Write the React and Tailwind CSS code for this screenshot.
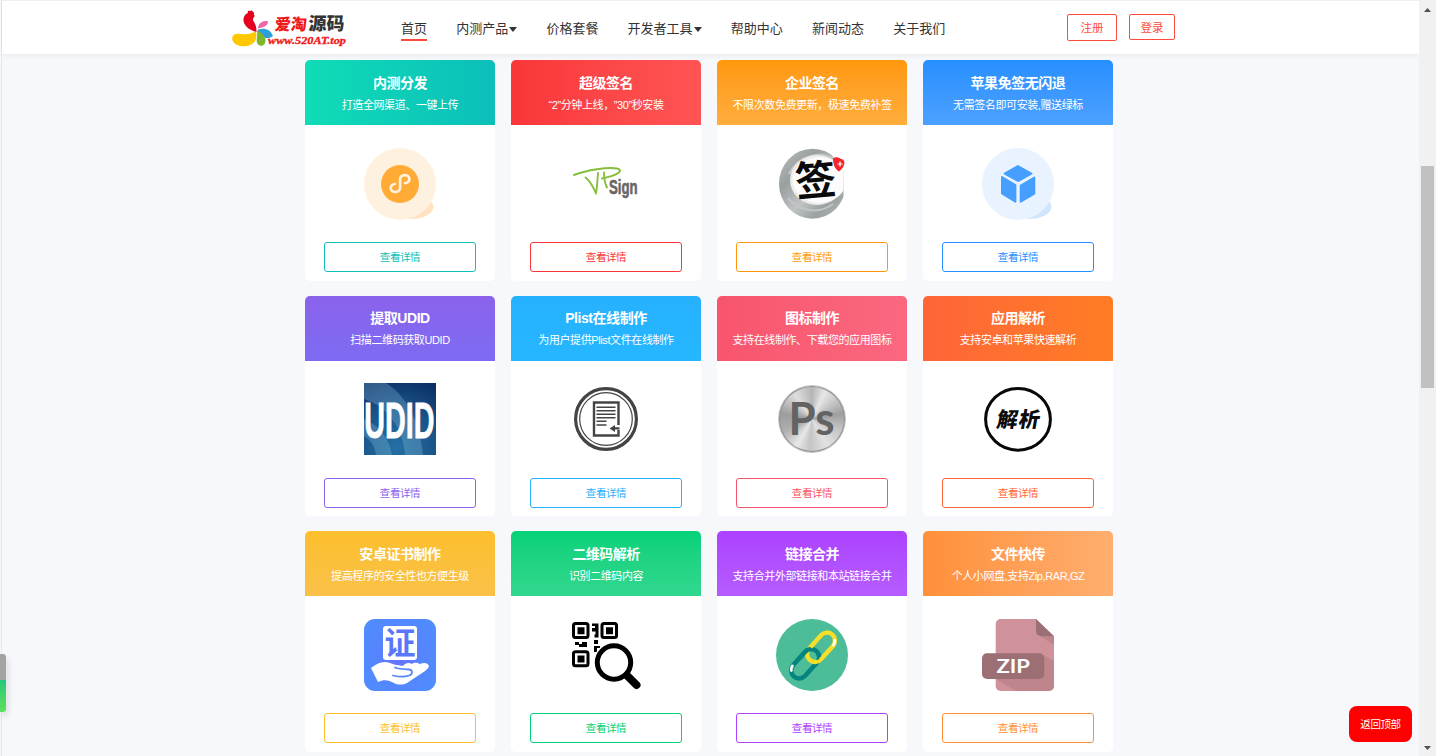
const zh = "font-['Liberation_Sans','Noto_Sans_CJK_SC',sans-serif]"
const CJK = "'Noto Sans CJK SC', sans-serif"

const navItems = [
  { label: "首页", active: true },
  { label: "内测产品", caret: true },
  { label: "价格套餐" },
  { label: "开发者工具", caret: true },
  { label: "帮助中心" },
  { label: "新闻动态" },
  { label: "关于我们" },
]

function Logo() {
  return (
    <svg className="block h-[44px] w-[118px] shrink-0 overflow-visible" viewBox="0 0 118 44">
      {/* rooster */}
      <path d="M24.500 24C16 22 11 16.500 11.500 11c.3-3.500 2.300-5.500 4.500-6-1-1.800.6-3 2-1.800 1.200-1.500 3-.6 2.800.8 1.500.2 1.700 1.500 1 2.500.9.7 1.200 1.700.2 2.500-1.500 1.500-1.500 3 0 5 1.700 2.500 2.500 5.500 2.500 10z" fill="#e60020" />
      <path d="M26 20.500C26.500 15 31 12 36 13.500c0 4-4.500 6-10 7z" fill="#f065a6" />
      <path d="M25.500 22c6-3 13-1 15.500 6-6.500 5-13 1-15.500-6z" fill="#2e9fdb" />
      <path d="M25 22.500c7 3 10.500 9 7.500 13.500-3 3.500-7 1.500-7.700-2-.6-3.500 1-7 .2-11.500z" fill="#7cb62c" />
      <path d="M.500 29c1.500-4.500 7-3 11-2.700C17 26.500 20 25 24 23.500c1.500 8-1.500 13-9.500 14.500C7 39.500-1.500 35 .500 29z" fill="#fdc800" />
      <text x="42" y="22" fontSize="16" fontWeight="900" fill="#f01818" transform="skewX(-6) translate(2.500 0)" style={{ fontFamily: CJK }}>爱淘</text>
      <text x="76" y="22.500" fontSize="18" fontWeight="900" fill="#333" transform="skewX(-2) translate(1 0)" style={{ fontFamily: CJK }}>源码</text>
      <text x="36" y="36" fontSize="10" fontWeight="bold" fontStyle="italic" fill="#f01818" stroke="#f01818" strokeWidth=".3" textLength="78" lengthAdjust="spacingAndGlyphs" style={{ fontFamily: "'Liberation Serif', serif" }}>www.520AT.top</text>
    </svg>
  )
}

function MiniProgram() {
  return (
    <svg className="size-[72px]" viewBox="0 0 72 72">
      <path d="M44 71c14 1 25-5 25.500-12 0-3-1-4-3-6z" fill="#ffe3c0" />
      <circle cx="36" cy="36" r="36" fill="#fff1e0" />
      <circle cx="36" cy="36" r="19" fill="#ffab36" />
      <path d="M31 36c-2.700.3-4.300 2.100-4.300 4.100 0 2.200 2.100 3.900 4.700 3.900s4.700-1.800 4.700-4.100v-8.700c0-2.300 2-4.100 4.600-4.100s4.700 1.700 4.700 3.900c0 2-1.600 3.800-4.300 4.100" fill="none" stroke="#fff1e0" strokeWidth="2.700" strokeLinecap="round" />
    </svg>
  )
}

function VpSign() {
  return (
    <svg className="size-[72px] overflow-visible" viewBox="0 0 72 72">
      <g fill="none" stroke="#86bf3c" strokeLinecap="round" strokeLinejoin="round">
        <path d="M4 27C17 22 38 19 47 20.500 54 22 49 27 32 30.500" strokeWidth="2" />
        <path d="M15.500 29.500c4 3 8 10 10.500 16C27 40 27.500 32 28 25" strokeWidth="1.900" />
        <path d="M34 24.500c0 5 .5 10 3 15" strokeWidth="1.900" />
      </g>
      <g transform="translate(39 46) scale(.66 1)">
        <text fontSize="20" fontWeight="bold" fill="#666" stroke="#666" strokeWidth=".6" style={{ fontFamily: "'Liberation Sans', sans-serif" }}>Sign</text>
      </g>
    </svg>
  )
}

function InkSign() {
  return (
    <svg className="size-[72px] overflow-visible" viewBox="0 0 72 72">
      <defs>
        <linearGradient id="ink" x1="0" y1="0" x2="1" y2="1">
          <stop offset="0" stopColor="#b9bdbd" />
          <stop offset=".3" stopColor="#9a9f9f" />
          <stop offset=".55" stopColor="#bfc3c3" />
          <stop offset=".75" stopColor="#9ba1a2" />
          <stop offset="1" stopColor="#b5b8b8" />
        </linearGradient>
        <clipPath id="inkClip"><path d="M0 0h52l8 14 7.500 10v32L58 72H0z" /></clipPath>
      </defs>
      <g clipPath="url(#inkClip)">
        <ellipse cx="36.500" cy="35.700" rx="33.500" ry="35" fill="url(#ink)" />
        <path d="M13 26C24 6 46 3 58 12" fill="none" stroke="#c6c9c9" strokeWidth="2.500" />
        <path d="M12 50c11 13 30 17 45 6" fill="none" stroke="#c0c4c4" strokeWidth="2" />
        <ellipse cx="41" cy="32" rx="27" ry="25" fill="#ececec" />
        <ellipse cx="43.500" cy="32" rx="27" ry="23" fill="#fcfcfc" />
      </g>
      <text x="19" y="47" fontSize="41" fontWeight="bold" fill="#0a0a0a" transform="rotate(-5 40 32)" style={{ fontFamily: CJK }}>签</text>
      <path d="M57 10c3-1 5-1 8 1 3 0 4 3 3 6s-3 5-5 6.500c-3-2-6-5-6-13.500z" fill="#f4262a" />
      <path d="M61.500 16h5M64 13.500v5" stroke="#fff" strokeWidth="1.200" />
    </svg>
  )
}

function Cube() {
  return (
    <svg className="size-[72px]" viewBox="0 0 72 72">
      <path d="M44 71c14 1 25-5 25.500-12 0-3-1-4-3-6z" fill="#cfe6ff" />
      <circle cx="36" cy="36" r="36" fill="#e8f3ff" />
      <g fill="#469fff" stroke="#469fff" strokeWidth="2" strokeLinejoin="round">
        <path d="M35.800 18l13.600 7.600-13 7.400-13.700-7.400z" />
        <path d="M20 29l13.400 8v16.700L20 45.500z" />
        <path d="M52.300 29.500l-13.600 8v16.200l13.600-8z" />
      </g>
    </svg>
  )
}

function Udid() {
  return (
    <svg className="size-[72px] overflow-visible" viewBox="0 0 72 72">
      <defs>
        <radialGradient id="udid" cx=".45" cy=".9" r="1">
          <stop offset="0" stopColor="#2470a4" />
          <stop offset=".55" stopColor="#1a5489" />
          <stop offset="1" stopColor="#0b2f66" />
        </radialGradient>
      </defs>
      <path d="M0 0h72v72H0z" fill="url(#udid)" />
      <path d="M0 0h22c22 14 34 40 37 72H41C39 45 24 24 0 16z" fill="#8dc0dc" opacity=".3" />
      <path d="M0 36c15 6 25 18 28 36H12C11 64 7 57 0 53z" fill="#8dc0dc" opacity=".3" />
      <g transform="translate(.3 55.200) scale(.575 1)" fontSize="50" fontWeight="bold" style={{ fontFamily: "'Liberation Sans', sans-serif" }}>
        <text fill="#fff" stroke="#fff" strokeWidth=".8">UDID</text>
      </g>
    </svg>
  )
}

function Plist() {
  return (
    <svg className="size-[72px]" viewBox="0 0 72 72" fill="none" stroke="#444">
      <circle cx="36" cy="36" r="30.400" strokeWidth="3.200" />
      <circle cx="36" cy="36" r="26.300" strokeWidth="1.200" />
      <path d="M48.500 42V19.500H24V52.500h24.500V47" strokeWidth="2.400" />
      <path d="M26.500 24.200h19M26.500 27.700h19M26.500 31.200h19M26.500 34.700h19M26.500 38.300h10M26.500 42h10" strokeWidth="1.500" />
      <path d="M43 45.400h6.500" strokeWidth="2.200" />
      <path d="M39.500 45.400l5.500-3.500v7z" fill="#444" stroke="none" />
    </svg>
  )
}

function Ps() {
  return (
    <div className="flex size-[72px] items-center justify-center">
      <div className="flex size-[68px] items-center justify-center rounded-full border border-[#c9c9c9] bg-[conic-gradient(#b5b5b5,#e6e6e6_25deg,#c9c9c9_50deg,#9f9f9f_80deg,#c4c4c4_110deg,#e2e2e2_150deg,#c4c4c4_185deg,#e8e8e8_210deg,#b0b0b0_245deg,#9d9d9d_280deg,#dedede_325deg,#b5b5b5)] shadow-[inset_0_0_0_1px_#8c8c8c]">
        <svg className="size-[66px] overflow-visible" viewBox="3 3 66 66">
          <text x="12.500" y="51.500" fontSize="45" fontWeight="bold" fill="#636363" textLength="46" lengthAdjust="spacingAndGlyphs" style={{ fontFamily: "Lato, sans-serif" }}>Ps</text>
        </svg>
      </div>
    </div>
  )
}

function Parse() {
  return (
    <svg className="size-[72px]" viewBox="0 0 72 72">
      <ellipse cx="36" cy="36.300" rx="32.400" ry="30.900" fill="none" stroke="#080808" strokeWidth="3" />
      <text x="14.500" y="44.500" fontSize="21" fontWeight="900" fill="#0c0c0c" textLength="43" transform="skewX(-10) translate(7 0)" style={{ fontFamily: CJK }}>解析</text>
    </svg>
  )
}

function Certificate() {
  return (
    <svg className="size-[72px]" viewBox="0 0 72 72">
      <defs>
        <radialGradient id="cert" cx=".5" cy=".5" r=".6">
          <stop offset="0" stopColor="#6f6dfc" />
          <stop offset=".5" stopColor="#5684fd" />
          <stop offset="1" stopColor="#508cff" />
        </radialGradient>
      </defs>
      <rect width="72" height="72" rx="11" fill="url(#cert)" />
      <rect x="19" y="7" width="34" height="34" rx="3" fill="#fff" />
      <text x="20.500" y="35" fontSize="31" fontWeight="bold" fill="#5a77fb" style={{ fontFamily: CJK }}>证</text>
      <path d="M7 49c5-4 9-6 14-6 5 0 8 3 12 3l6 1c2-3 6-4 9-2 3-2 5-1 8 0 4-2 8-1 9 2-1 4-6 6-10 9L43 64c-4 2-9 2-13 0-5-3-10-4-16-1z" fill="#fff" />
      <path d="M29 56.500c6 1.500 12 1.500 16 0 4-1.500 4-5.500 0-6-4-.3-9-.3-14-2" fill="none" stroke="#5684fd" strokeWidth="1.800" strokeLinecap="round" />
    </svg>
  )
}

function QrSearch() {
  return (
    <svg className="size-[72px]" viewBox="0 0 72 72">
      <g fill="none" stroke="#000" strokeWidth="3">
        <rect x="3.500" y="4.500" width="14.500" height="14" rx="2" />
        <rect x="32" y="4.500" width="14.500" height="14" rx="2" />
        <rect x="3.500" y="32.800" width="14.500" height="14" rx="2" />
      </g>
      <path d="M7.500 8.200h7v7h-7zM36 8.200h7v7h-7zM7.500 36.500h7v7h-7z" />
      <path d="M22 4.500h6.500v14h-4v-3h1v-3H22V9h3V7h-3zM5 23h4v2h3v-2h5v5H9v-2H5zM24 21h4v4h-4zM13 25h4v3h-4zM24 27h6v2h-3v4h-3z" />
      <circle cx="44" cy="43.500" r="20.500" fill="#fff" />
      <circle cx="44" cy="43.500" r="16.700" fill="none" stroke="#000" strokeWidth="5" />
      <path d="M57 56.500l9.500 9.500" stroke="#000" strokeWidth="8" strokeLinecap="round" />
    </svg>
  )
}

function ChainLink() {
  return (
    <svg className="size-[72px]" viewBox="0 0 72 72" fill="none">
      <defs><clipPath id="chainTop"><path d="M14 28h20l12 8-4 5H14z" /></clipPath></defs>
      <circle cx="36" cy="36" r="36" fill="#4dbc98" />
      <rect x="12.300" y="37" width="34" height="16" rx="8" stroke="#058480" strokeWidth="4.500" transform="rotate(-48 29 45)" />
      <rect x="28" y="20.300" width="34" height="16" rx="8" stroke="#f5df28" strokeWidth="4.500" transform="rotate(-48 45 28.300)" />
      <g clipPath="url(#chainTop)">
        <rect x="12.300" y="37" width="34" height="16" rx="8" stroke="#058480" strokeWidth="4.500" transform="rotate(-48 29 45)" />
      </g>
      <path d="M58.500 21.500c.3 1.500 0 3-1 4.500M15.300 51.500c-.3-1.500 0-3 1-4.500" stroke="#fff" strokeWidth="2.800" strokeLinecap="round" />
    </svg>
  )
}

function ZipFile() {
  return (
    <svg className="size-[72px]" viewBox="0 0 72 72">
      <path d="M18.700 0H54l18 17.300V67a5 5 0 0 1-5 5H18.700a5 5 0 0 1-5-5V5a5 5 0 0 1 5-5z" fill="#d0929a" />
      <path d="M58 17.300h14v8.700zM62 36l10 6v25a5 5 0 0 1-5 5H34L14 60z" fill="#be868c" />
      <path d="M54 0l18 17.300H59a5 5 0 0 1-5-5z" fill="#9b6f74" />
      <rect y="34.300" width="62.300" height="25.700" rx="5" fill="#9b6f74" />
      <text x="14.500" y="53.700" fontSize="19.500" fontWeight="bold" fill="#fff" textLength="33.500" lengthAdjust="spacingAndGlyphs" style={{ fontFamily: "Lato, sans-serif" }}>ZIP</text>
    </svg>
  )
}

const products = [
  { title: "内测分发", desc: "打造全网渠道、一键上传", icon: MiniProgram, head: "bg-linear-to-r from-[#10dcb6] to-[#0cbfba]", btn: "border-[#0cbfba] text-[#0cbfba]" },
  { title: "超级签名", desc: "“2”分钟上线，”30”秒安装", icon: VpSign, head: "bg-linear-to-r from-[#f93639] to-[#ff5454]", btn: "border-[#f93639] text-[#f93639]" },
  { title: "企业签名", desc: "不限次数免费更新，极速免费补签", icon: InkSign, head: "bg-linear-to-b from-[#ff9809] to-[#ffad3c]", btn: "border-[#ff9809] text-[#ff9809]" },
  { title: "苹果免签无闪退", desc: "无需签名即可安装,赠送绿标", icon: Cube, head: "bg-linear-to-b from-[#268fff] to-[#4ca1ff]", btn: "border-[#268fff] text-[#268fff]" },
  { title: "提取UDID", desc: "扫描二维码获取UDID", icon: Udid, head: "bg-linear-to-b from-[#8b62ec] to-[#7d6bf2]", btn: "border-[#8b62ec] text-[#8b62ec]" },
  { title: "Plist在线制作", desc: "为用户提供Plist文件在线制作", icon: Plist, head: "bg-linear-to-b from-[#26b1ff] to-[#26b6ff]", btn: "border-[#26b1ff] text-[#26b1ff]" },
  { title: "图标制作", desc: "支持在线制作、下载您的应用图标", icon: Ps, head: "bg-linear-to-r from-[#f8556d] to-[#fa6880]", btn: "border-[#f8556d] text-[#f8556d]" },
  { title: "应用解析", desc: "支持安卓和苹果快速解析", icon: Parse, head: "bg-linear-to-r from-[#ff6537] to-[#ff7d24]", btn: "border-[#ff6537] text-[#ff6537]" },
  { title: "安卓证书制作", desc: "提高程序的安全性也方便生级", icon: Certificate, head: "bg-linear-to-b from-[#fdbf2d] to-[#f9c147]", btn: "border-[#fdbf2d] text-[#fdbf2d]" },
  { title: "二维码解析", desc: "识别二维码内容", icon: QrSearch, head: "bg-linear-to-b from-[#04d179] to-[#30d78e]", btn: "border-[#04d179] text-[#04d179]" },
  { title: "链接合并", desc: "支持合并外部链接和本站链接合并", icon: ChainLink, head: "bg-linear-to-b from-[#ac42ff] to-[#b65cff]", btn: "border-[#ac42ff] text-[#ac42ff]" },
  { title: "文件快传", desc: "个人小网盘,支持Zip,RAR,GZ", icon: ZipFile, head: "bg-linear-to-r from-[#ff9038] to-[#ffae6f]", btn: "border-[#ff9038] text-[#ff9038]" },
]

function ProductCard({ product }) {
  const Icon = product.icon
  return (
    <div className="flex flex-col items-center overflow-hidden rounded-[5px] bg-white">
      <div className={`flex h-[65px] w-full shrink-0 flex-col items-center whitespace-nowrap pt-[11.500px] text-white ${product.head}`}>
        <h3 className="text-[14px] leading-[22px] font-bold tracking-[-0.45px]">{product.title}</h3>
        <p className="text-[11px] leading-[22px] tracking-[-0.4px] [text-spacing-trim:space-all]">{product.desc}</p>
      </div>
      <div className="mt-[22.500px] h-[72px] shrink-0">
        <Icon />
      </div>
      <button className={`mt-[22.400px] h-[30px] w-[152px] shrink-0 rounded-[3px] border pt-[2px] text-[10.500px] tracking-[-0.4px] ${product.btn}`}>
        查看详情
      </button>
    </div>
  )
}

function Header() {
  return (
    <header className="relative z-10 flex h-[54px] items-start border-t border-[#eee] bg-white pl-[230px] shadow-[0_1px_6px_rgba(0,0,0,0.07)]">
      <div className="pt-[7px]"><Logo /></div>
      <nav className="ml-[51px] flex w-[666px] gap-[29.200px] pt-[17px] text-[13px] leading-[22px] text-[#333]">
        {navItems.map((item) => (
          <a
            key={item.label}
            className={`flex h-[23px] shrink-0 items-start whitespace-nowrap ${item.active ? "border-b-2 border-[#ff4b3e]" : ""}`}
          >
            {item.label}
            {item.caret && (
              <svg className="mt-[9px] ml-px h-[5px] w-[8px]" viewBox="0 0 8 5"><path d="M0 0h8L4 5z" fill="#333" /></svg>
            )}
          </a>
        ))}
      </nav>
      <div className="flex gap-3 pt-[13px] text-[11.500px] text-[#ff4b3e]">
        <button className="h-[27px] w-[50px] rounded-[2px] border border-[#ff4b3e] pt-[2px]">注册</button>
        <button className="h-[26px] w-[46px] rounded-[2px] border border-[#ff4b3e] pt-[3px]">登录</button>
      </div>
    </header>
  )
}

function Scrollbar() {
  return (
    <div className="flex w-[17px] shrink-0 flex-col items-center bg-[#f1f1f1]">
      <svg className="mt-[8px] h-[4px] w-[7px] shrink-0" viewBox="0 0 7 4"><path d="M0 4h7L3.500 0z" fill="#505050" /></svg>
      <div className="mt-[154px] h-[222px] w-[13px] bg-[#c1c1c1]" />
      <svg className="mt-auto mb-[6px] h-[4px] w-[7px] shrink-0" viewBox="0 0 7 4"><path d="M0 0h7L3.500 4z" fill="#505050" /></svg>
    </div>
  )
}

export default function App() {
  return (
    <div className={`relative flex h-[756px] w-[1436px] overflow-hidden bg-[#f7f8fc] ${zh}`}>
      <div className="w-[1419px] overflow-hidden border-l border-[#f7f8fc]">
        <div className="h-full border-l border-[#e6e7ea]">
          <Header />
          <main className="grid auto-rows-[220.500px] grid-cols-[repeat(4,190px)] gap-x-4 gap-y-[15px] pt-[6.250px] pl-[303px]">
            {products.map((product) => (
              <ProductCard key={product.title} product={product} />
            ))}
          </main>
        </div>
      </div>
      <Scrollbar />

      {/* floating widgets */}
      <div className="absolute top-[654px] left-0 flex h-[58px] w-[6px] flex-col overflow-hidden rounded-r-[3px] shadow-[2px_4px_6px_rgba(0,0,0,0.12)]">
        <div className="h-[26px] bg-[#a3a3a3]" />
        <div className="flex-1 bg-linear-to-b from-[#20c878] to-[#5ce05c]" />
      </div>
      <button className="absolute top-[706px] left-[1349px] h-[36px] w-[63px] rounded-[8px] bg-[#ff0000] pt-[2px] text-[10.500px] tracking-[-0.4px] text-white">
        返回顶部
      </button>
    </div>
  )
}
